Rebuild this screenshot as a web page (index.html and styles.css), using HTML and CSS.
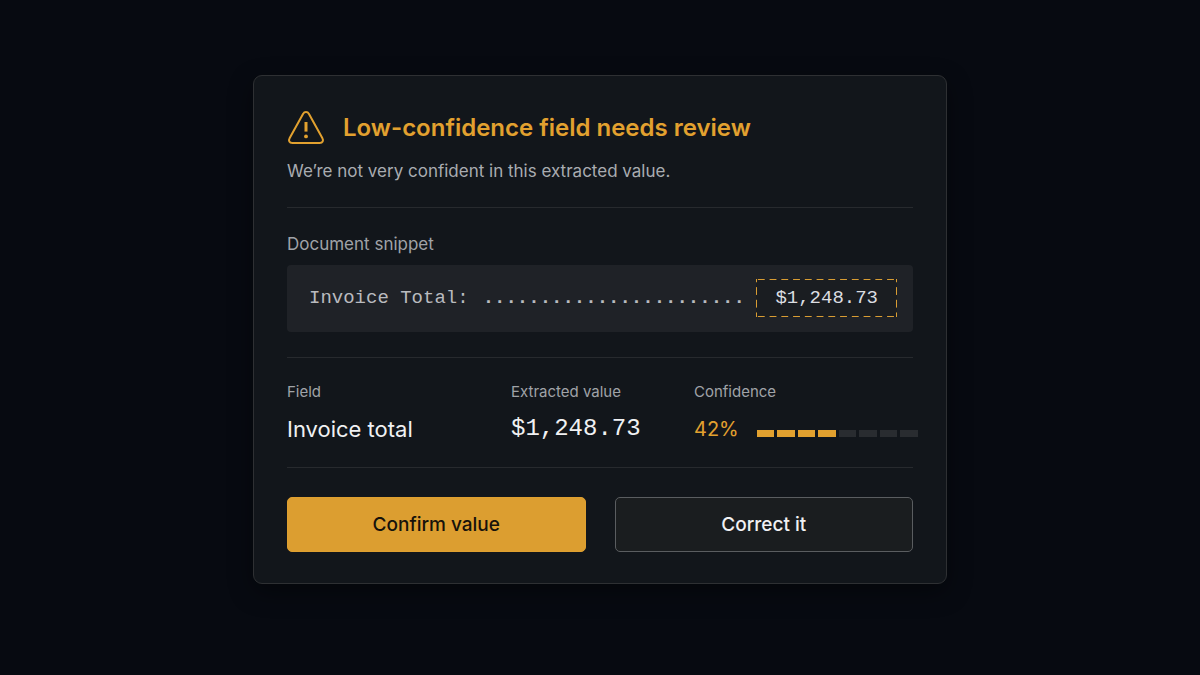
FILE: index.html
```html
<!DOCTYPE html>
<html lang="en">

<head>
    <meta charset="UTF-8">
    <meta name="viewport" content="width=device-width, initial-scale=1.0">
    <title>Field review</title>
    <link rel="stylesheet" href="styles.css">
</head>

<body>
    <main class="card">
        <header class="header">
            <div class="title">
                <svg class="title-icon" viewBox="0 0 38 34" aria-hidden="true">
                    <path d="M16 3 2.7 27C1.1 29.9 2.4 32 5.4 32h27.2c3 0 4.3-2.1 2.7-5L22 3c-1.5-2.6-4.5-2.6-6 0Z" />
                    <path class="mark" d="M19 11v9.6" />
                    <circle cx="19" cy="25.4" r="1.9" />
                </svg>
                <h1>Low-confidence field needs review</h1>
            </div>
            <p class="subtitle">We’re not very confident in this extracted value.</p>
        </header>

        <section class="snippet-section">
            <h2>Document snippet</h2>
            <div class="snippet">
                <span class="snippet-label">Invoice Total:</span>
                <span class="snippet-dots">.......................</span>
                <span class="snippet-value">$1,248.73</span>
            </div>
        </section>

        <dl class="fields">
            <div class="field">
                <dt>Field</dt>
                <dd>Invoice total</dd>
            </div>
            <div class="field">
                <dt>Extracted value</dt>
                <dd class="amount">$1,248.73</dd>
            </div>
            <div class="field">
                <dt>Confidence</dt>
                <dd class="confidence">
                    <span>42%</span>
                    <span class="meter">
                        <i class="on"></i><i class="on"></i><i class="on"></i><i class="on"></i><i></i><i></i><i></i><i></i>
                    </span>
                </dd>
            </div>
        </dl>

        <div class="actions">
            <button type="button" class="btn btn-confirm">Confirm value</button>
            <button type="button" class="btn btn-correct">Correct it</button>
        </div>
    </main>
</body>

</html>
```
FILE: styles.css
```css
* {
    box-sizing: border-box;
}

body {
    min-height: 100vh;
    margin: 0;
    padding: 75px 24px;
    background-color: #070a11;
    color: #f0f1f3;
    font-family: Inter, sans-serif;
}

h1,
h2,
p,
dl,
dd {
    margin: 0;
}

.card {
    max-width: 694px;
    margin: 0 auto;
    padding: 32px 33px 31px;
    border: 1px solid #2e3033;
    border-radius: 9px;
    background-color: #12161b;
    box-shadow: 0 8px 24px rgba(0, 0, 0, 0.4);
}

.header,
.snippet-section,
.fields {
    border-bottom: 1px solid #272a2e;
}

/* header */
.header {
    padding-bottom: 24px;
}

.title {
    display: flex;
    align-items: center;
    gap: 18px;
    height: 40px;
}

.title-icon {
    flex: none;
    width: 38px;
    height: 34px;
    fill: none;
    stroke: #e2a12f;
    stroke-width: 2;
    stroke-linejoin: round;
}

.title-icon .mark {
    stroke-width: 3;
}

.title-icon circle {
    fill: #e2a12f;
    stroke: none;
}

h1 {
    color: #e2a12f;
    font-size: 24px;
    font-weight: 600;
    line-height: 32px;
}

.subtitle {
    margin-top: 11px;
    color: #a9acb1;
    font-size: 17px;
    line-height: 24px;
}

/* document snippet */
.snippet-section {
    padding: 24px 0 25px;
}

h2 {
    margin-bottom: 9px;
    color: #a0a3a8;
    font-size: 17px;
    font-weight: 400;
    line-height: 24px;
}

.snippet {
    display: flex;
    align-items: center;
    padding: 14px 16px 15px 22px;
    border-radius: 4px;
    background-color: #1f2227;
    color: #b9bbbf;
    font-family: "Courier New", "Liberation Mono", monospace;
    font-size: 19px;
    line-height: 24px;
}

.snippet-dots {
    flex: 1;
    margin: 0 8px 0 14px;
    overflow: hidden;
    font-weight: 700;
    white-space: nowrap;
}

/* long dashes, drawn as one tiled strip per side */
.snippet-value {
    --dash: #d99d33 0 3px, transparent 3px 8px, #d99d33 8px;
    padding: 7px 19px;
    background:
        linear-gradient(90deg, var(--dash)) top / 12px 1px round no-repeat,
        linear-gradient(90deg, var(--dash)) bottom / 12px 1px round no-repeat,
        linear-gradient(var(--dash)) left / 1px 12px no-repeat round,
        linear-gradient(var(--dash)) right / 1px 12px no-repeat round,
        #1a1d21;
    color: #dcdee1;
}

/* extracted fields */
.fields {
    display: grid;
    grid-template-columns: minmax(0, 224fr) minmax(0, 183fr) minmax(0, 219fr);
    padding: 24px 0;
}

dt {
    color: #a0a3a8;
    font-size: 15px;
    line-height: 20px;
}

dd {
    margin-top: 13px;
    font-size: 22px;
    line-height: 28px;
    white-space: nowrap;
}

.amount {
    font-family: "Courier New", "Liberation Mono", monospace;
    font-size: 24px;
}

.confidence {
    display: flex;
    align-items: center;
    gap: 18px;
    color: #e2a12f;
    font-size: 20px;
}

.meter {
    display: flex;
    flex: none;
    gap: 3px;
    width: 161px;
    padding-top: 9px;
}

.meter i {
    flex: 1;
    height: 7px;
    background-color: #292c30;
}

.meter .on {
    background-color: #e2a12f;
}

/* buttons */
.actions {
    display: grid;
    grid-template-columns: 1fr 1fr;
    gap: 29px;
    padding-top: 29px;
}

.btn {
    height: 55px;
    border: 1px solid #dfa030;
    border-radius: 5px;
    font-family: inherit;
    font-size: 19px;
    font-weight: 500;
    cursor: pointer;
}

.btn-confirm {
    background-color: #dc9e30;
    color: #16120b;
}

.btn-correct {
    border-color: #5a5d60;
    background-color: #1a1d1f;
    color: #f0f1f3;
}
```
